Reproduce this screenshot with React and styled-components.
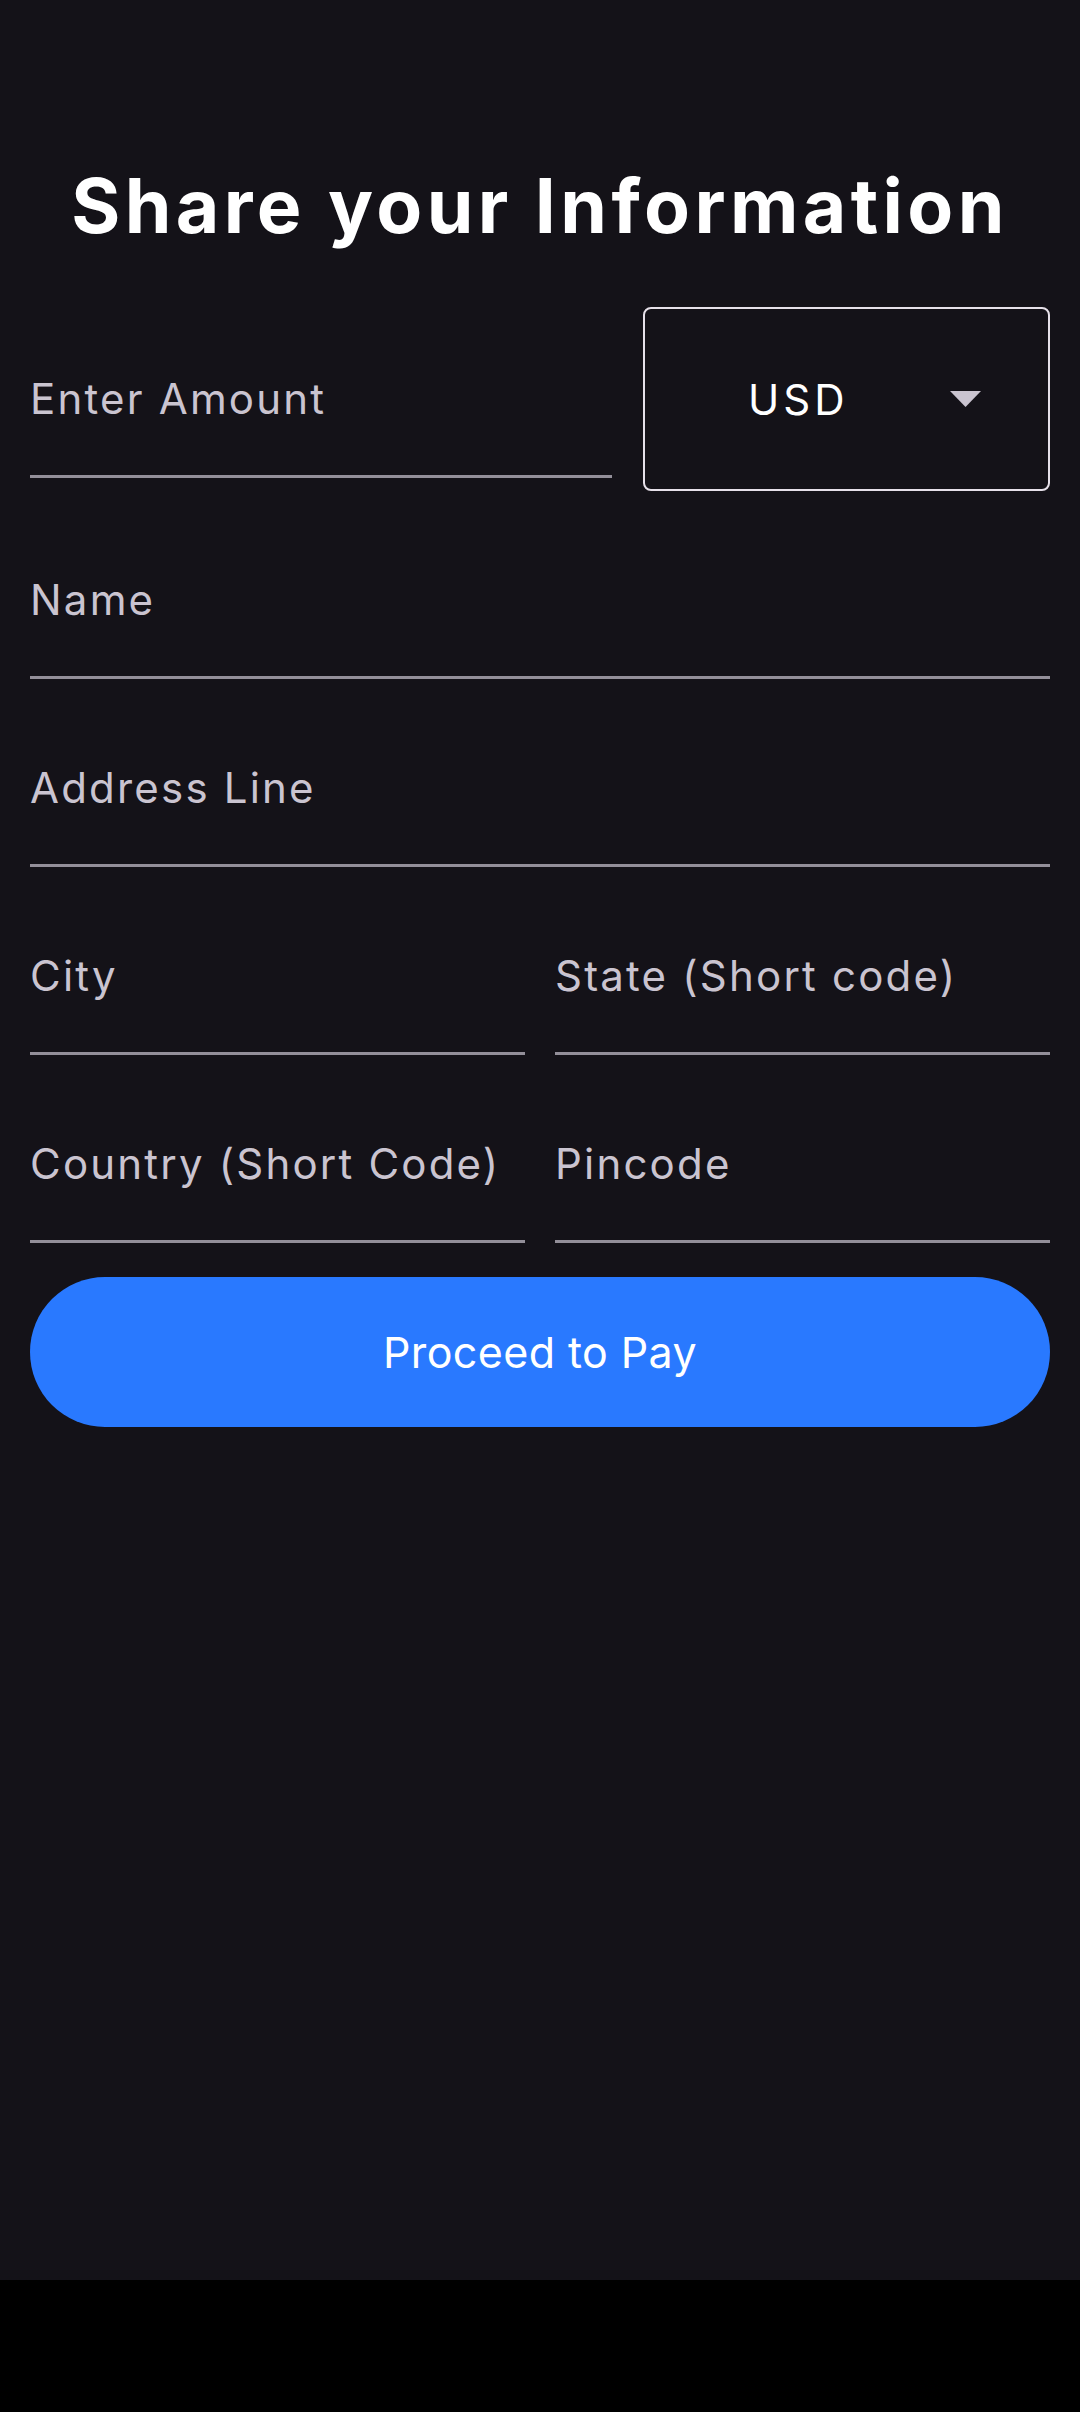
import styled, { createGlobalStyle } from "styled-components";

const GlobalStyle = createGlobalStyle`
  html, body {
    margin: 0;
    padding: 0;
    background: #000000;
  }
  * {
    box-sizing: border-box;
  }
`;

const Screen = styled.div`
  min-height: 2280px;
  background: #141218;
  padding: 0 30px;
  font-family: Inter, "Noto Sans", sans-serif;
`;

const Title = styled.h1`
  margin: 0;
  padding: 161px 0 57px;
  text-align: center;
  color: #ffffff;
  font-family: Inter, "Noto Sans", sans-serif;
  font-weight: 700;
  font-size: 75px;
  line-height: 89px;
  letter-spacing: 4.4px;
`;

const Form = styled.form`
  display: flex;
  flex-direction: column;
  gap: 30px;
`;

const Row = styled.div`
  display: flex;
  align-items: center;
  gap: ${(p) => p.$gap || 30}px;
`;

const Field = styled.input`
  flex: 1;
  min-width: 0;
  height: 158px;
  padding: 53px 0 52px;
  border: none;
  border-bottom: 3px solid #938f99;
  background: transparent;
  outline: none;
  color: #e6e0e9;
  font-family: Inter, "Noto Sans", sans-serif;
  font-size: 42px;
  line-height: 50px;
  letter-spacing: 2.2px;

  &::placeholder {
    color: #cac4d0;
    opacity: 1;
  }
`;

const Select = styled.div`
  width: 407px;
  height: 184px;
  flex-shrink: 0;
  display: flex;
  align-items: center;
  padding: 0 67px 0 103px;
  border: 2px solid #e6e0e9;
  border-radius: 8px;
  color: #ffffff;
  font-size: 42px;
  letter-spacing: 4px;
`;

const SelectValue = styled.span`
  flex: 1;
`;

const Caret = styled.svg`
  width: 31px;
  height: 16px;
  fill: #cac4d0;
`;

const PayButton = styled.button`
  margin-top: 4px;
  height: 150px;
  width: 100%;
  border: none;
  border-radius: 75px;
  background: #2979ff;
  color: #ffffff;
  font-family: Inter, "Noto Sans", sans-serif;
  font-size: 43px;
  letter-spacing: 0.4px;
  cursor: pointer;
`;

export default function App() {
  return (
    <>
      <GlobalStyle />
      <Screen>
        <Title>Share your Information</Title>
        <Form onSubmit={(e) => e.preventDefault()}>
          <Row $gap={31}>
            <Field placeholder="Enter Amount" />
            <Select>
              <SelectValue>USD</SelectValue>
              <Caret viewBox="0 0 31 16">
                <polygon points="0,0 31,0 15.5,16" />
              </Caret>
            </Select>
          </Row>
          <Row>
            <Field placeholder="Name" />
          </Row>
          <Row>
            <Field placeholder="Address Line" />
          </Row>
          <Row>
            <Field placeholder="City" />
            <Field placeholder="State (Short code)" />
          </Row>
          <Row>
            <Field placeholder="Country (Short Code)" />
            <Field placeholder="Pincode" />
          </Row>
          <PayButton type="submit">Proceed to Pay</PayButton>
        </Form>
      </Screen>
    </>
  );
}
